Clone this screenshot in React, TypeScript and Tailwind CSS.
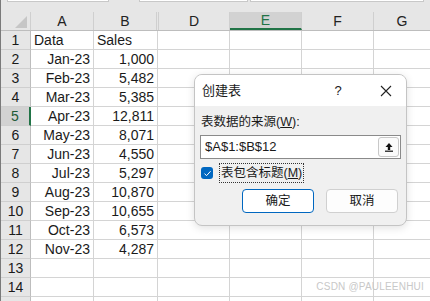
import React from 'react';

const rows: [string, string][] = [
  ['Data', 'Sales'],
  ['Jan-23', '1,000'],
  ['Feb-23', '5,482'],
  ['Mar-23', '5,385'],
  ['Apr-23', '12,811'],
  ['May-23', '8,071'],
  ['Jun-23', '4,550'],
  ['Jul-23', '5,297'],
  ['Aug-23', '10,870'],
  ['Sep-23', '10,655'],
  ['Oct-23', '6,573'],
  ['Nov-23', '4,287'],
  ['', ''],
  ['', ''],
  ['', ''],
];

const font = { fontFamily: '"Liberation Sans", "Noto Sans CJK SC", sans-serif' };

function HeaderRow() {
  return (
    <div className="flex h-[19px] bg-[#e6e6e6] border-b border-[#bdbdbd] text-[14px] text-[#222]">
      <div className="w-[30px] shrink-0 border-r border-[#cfcfcf] relative">
        <svg className="absolute right-[3px] bottom-[2px]" width="12" height="12" viewBox="0 0 12 12">
          <polygon points="12,0 12,12 0,12" fill="#c6c6c6" />
        </svg>
      </div>
      <div className="w-[63px] shrink-0 border-r border-[#cfcfcf] flex items-center justify-center">A</div>
      <div className="w-[63px] shrink-0 border-r border-[#cfcfcf] flex items-center justify-center">B</div>
      <div className="w-[2px] shrink-0 border-r border-[#cfcfcf]" />
      <div className="w-[71px] shrink-0 border-r border-[#cfcfcf] flex items-center justify-center">D</div>
      <div className="w-[72px] shrink-0 border-r border-[#cfcfcf] bg-[#d2d2d2] text-[#217346] border-b-2 border-b-[#217346] flex items-center justify-center">E</div>
      <div className="w-[72px] shrink-0 border-r border-[#cfcfcf] flex items-center justify-center">F</div>
      <div className="flex-1 flex items-center justify-center">G</div>
    </div>
  );
}

function Row({ n, a, b }: { n: number; a: string; b: string }) {
  const sel = n === 5;
  const first = n === 1;
  return (
    <div className="flex h-[19px] text-[14px] text-[#1a1a1a]">
      <div
        className={`w-[30px] shrink-0 border-b border-[#cfcfcf] flex items-center justify-center ${
          sel ? 'bg-[#d2d2d2] text-[#215a36] border-r-2 border-r-[#217346]' : 'bg-[#e6e6e6] border-r border-r-[#bdbdbd]'
        }`}
      >
        {n < 15 ? n : ''}
      </div>
      <div
        className={`w-[63px] shrink-0 border-r border-b border-[#d4d4d4] flex items-center px-[3px] ${
          first ? 'justify-start' : 'justify-end'
        }`}
      >
        {a}
      </div>
      <div
        className={`w-[64px] shrink-0 border-r border-b border-[#d4d4d4] flex items-center px-[3px] ${
          first ? 'justify-start' : 'justify-end'
        }`}
      >
        {b}
      </div>
      <div className="w-[72px] shrink-0 border-r border-b border-[#d4d4d4]" />
      <div className="w-[72px] shrink-0 border-r border-b border-[#d4d4d4]" />
      <div className="w-[72px] shrink-0 border-r border-b border-[#d4d4d4]" />
      <div className="flex-1 border-b border-[#d4d4d4]" />
    </div>
  );
}

function Dialog() {
  return (
    <div className="absolute left-[193px] top-[74px] w-[213px] h-[152px] rounded-[8px] border border-[#c4c4c4] bg-[#f0f0f0] shadow-[0_2px_8px_rgba(0,0,0,0.12)] overflow-hidden text-[12.5px] text-[#1a1a1a]">
      <div className="h-[31px] bg-white flex items-center pl-[7px] pr-[14px] text-[13px]">
        <span className="flex-1">创建表</span>
        <span className="w-[20px] text-center mr-[32px]">?</span>
        <svg width="12" height="12" viewBox="0 0 12 12">
          <path d="M1 1 L11 11 M11 1 L1 11" stroke="#222" strokeWidth="1.1" />
        </svg>
      </div>
      <div className="px-[5px] pt-[9px]">
        <div className="pl-[1px] h-[15px] leading-[15px]">
          表数据的来源(<span className="underline">W</span>):
        </div>
        <div className="mt-[5px] h-[24px] bg-white border border-[#8a8a8a] flex items-center pl-[4px] pr-[1px]">
          <span className="flex-1 text-[13px]">$A$1:$B$12</span>
          <div className="w-[21px] h-[20px] rounded-[3px] border border-[#c8c8c8] bg-[#fbfbfb] flex items-center justify-center">
            <svg width="10" height="10" viewBox="0 0 10 10">
              <path d="M5 1 L1.5 5 H3.8 V8 H6.2 V5 H8.5 Z" fill="#111" />
              <rect x="1" y="8.6" width="8" height="1.2" fill="#111" />
            </svg>
          </div>
        </div>
        <div className="mt-[4px] flex items-center h-[20px]">
          <div className="w-[12px] h-[12px] rounded-[3px] bg-[#0067c0] flex items-center justify-center ml-[1px]">
            <svg width="9" height="9" viewBox="0 0 9 9">
              <path d="M1.5 4.7 L3.6 6.6 L7.6 2.2" stroke="white" strokeWidth="1" fill="none" />
            </svg>
          </div>
          <div className="ml-[6px] h-[20px] px-[1px] border border-dotted border-[#333] flex items-center">
            表包含标题(<span className="underline">M</span>)
          </div>
        </div>
        <div className="mt-[6px] flex justify-end gap-[12px] pr-[3px]">
          <div className="w-[72px] h-[24px] rounded-[4px] border border-[#0067c0] bg-white flex items-center justify-center">
            确定
          </div>
          <div className="w-[72px] h-[24px] rounded-[4px] border border-[#d0d0d0] bg-[#fdfdfd] flex items-center justify-center">
            取消
          </div>
        </div>
      </div>
    </div>
  );
}

export default function App() {
  return (
    <div className="relative w-[430px] h-[301px] overflow-hidden bg-white border-l border-[#7a7a7a]" style={font}>
      <div className="h-[12px] bg-[#e6e6e6] flex items-start">
        <div className="ml-[6px] w-[102px] h-[2px] bg-white border-b border-r border-l border-[#c8c8c8]" />
        <div className="ml-[30px] w-[109px] h-[2px] bg-white border-b border-r border-l border-[#c8c8c8]" />
        <div className="ml-[2px] w-[174px] h-[2px] bg-white border-b border-r border-l border-[#c8c8c8]" />
      </div>
      <HeaderRow />
      {rows.map(([a, b], i) => (
        <Row key={i} n={i + 1} a={a} b={b} />
      ))}
      <Dialog />
      <div className="absolute right-[6px] bottom-[7px] text-[10px] text-[#c8c8c8] tracking-[0.2px]">
        CSDN @PAULEENHUI
      </div>
    </div>
  );
}
